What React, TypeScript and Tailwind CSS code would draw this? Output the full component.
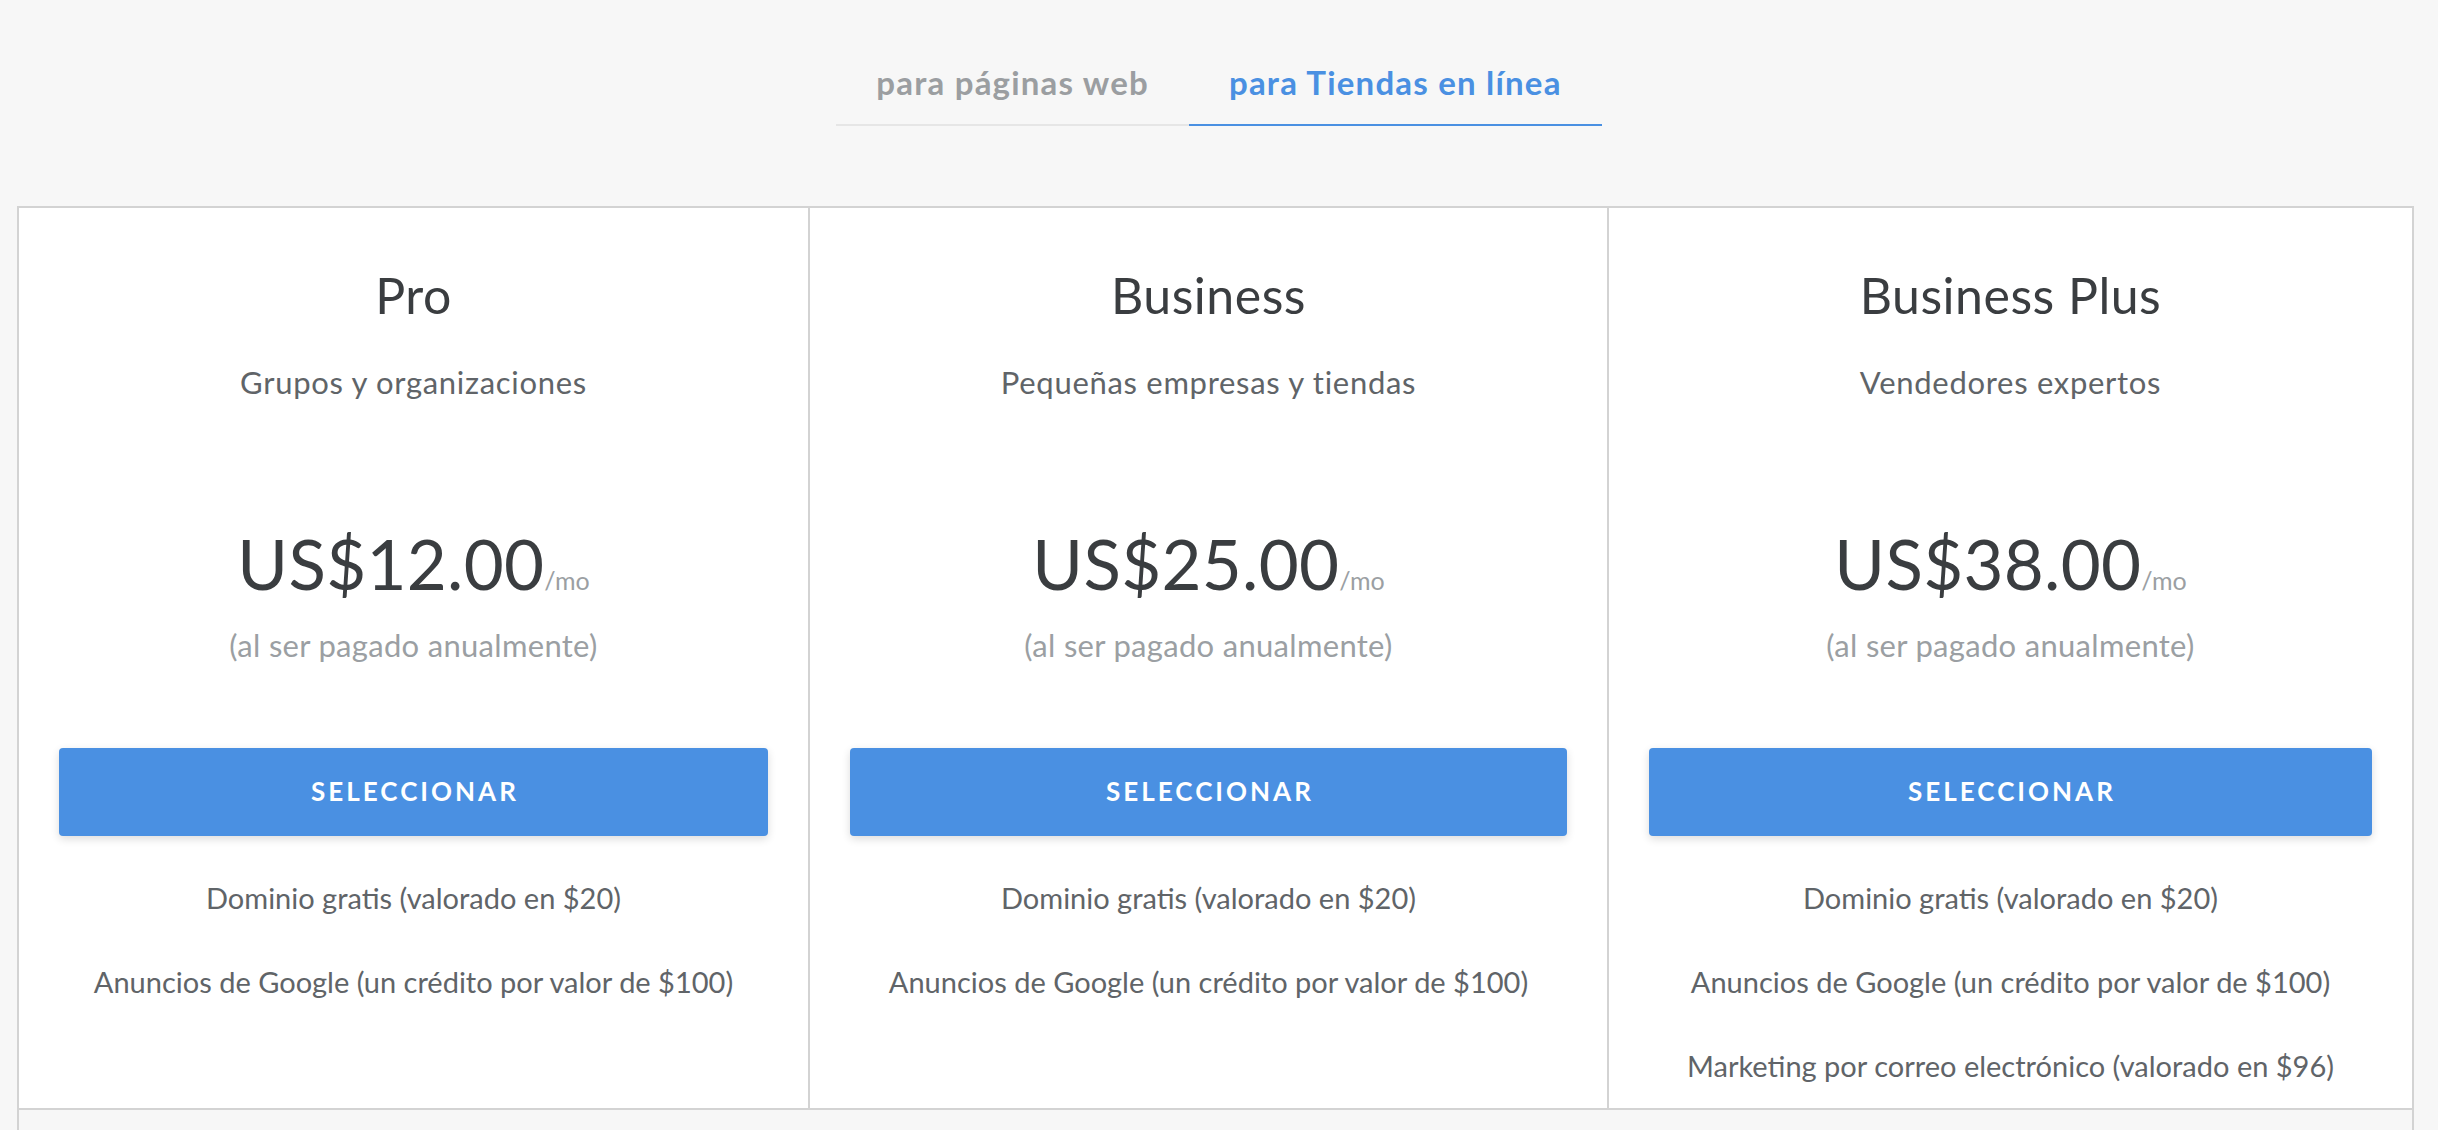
import React from "react";

type Plan = {
  name: string;
  desc: string;
  price: string;
  features: string[];
};

const plans: Plan[] = [
  {
    name: "Pro",
    desc: "Grupos y organizaciones",
    price: "US$12.00",
    features: [
      "Dominio gratis (valorado en $20)",
      "Anuncios de Google (un crédito por valor de $100)",
    ],
  },
  {
    name: "Business",
    desc: "Pequeñas empresas y tiendas",
    price: "US$25.00",
    features: [
      "Dominio gratis (valorado en $20)",
      "Anuncios de Google (un crédito por valor de $100)",
    ],
  },
  {
    name: "Business Plus",
    desc: "Vendedores expertos",
    price: "US$38.00",
    features: [
      "Dominio gratis (valorado en $20)",
      "Anuncios de Google (un crédito por valor de $100)",
      "Marketing por correo electrónico (valorado en $96)",
    ],
  },
];

function PlanColumn({ plan, first }: { plan: Plan; first: boolean }) {
  return (
    <div
      className={
        "flex flex-col items-center text-center pt-[57px] px-[40px] " +
        (first ? "" : "border-l-2 border-[#d3d3d3]")
      }
    >
      <h2 className="text-[50px] leading-[1.2] tracking-[0.5px] text-[#3a3d40] font-normal whitespace-nowrap">
        {plan.name}
      </h2>
      <p className="mt-[39px] text-[31px] leading-[1.2] tracking-[0.7px] text-[#606468] whitespace-nowrap">
        {plan.desc}
      </p>
      <div className="mt-[122px] text-[69px] leading-[1.2] tracking-[0.3px] text-[#3a3d40] whitespace-nowrap">
        {plan.price}
        <span className="text-[25px] tracking-normal text-[#9b9fa3]">/mo</span>
      </div>
      <p className="mt-[21px] text-[31px] leading-[1.2] tracking-[0.3px] text-[#9b9fa3] whitespace-nowrap">
        (al ser pagado anualmente)
      </p>
      <button className="mt-[84px] w-full h-[88px] rounded-[4px] bg-[#4a90e2] text-white text-[26px] font-bold tracking-[3px] pl-[3px] shadow-[0_3px_8px_rgba(0,0,0,0.14)]">
        SELECCIONAR
      </button>
      <ul className="mt-[20px] w-full">
        {plan.features.map((f) => (
          <li
            key={f}
            className="text-[29px] leading-[84px] text-[#606468] whitespace-nowrap"
          >
            {f}
          </li>
        ))}
      </ul>
    </div>
  );
}

export default function App() {
  return (
    <div className="min-h-screen bg-[#f7f7f7] font-['Lato',sans-serif] overflow-hidden">
      <div className="flex justify-center pt-[63px]">
        <button className="px-[40px] pb-[21px] border-b-2 border-[#e6e6e6] text-[33px] leading-[1.2] font-bold tracking-[1.2px] text-[#9b9ea1]">
          para páginas web
        </button>
        <button className="px-[40px] pb-[21px] border-b-2 border-[#4a90e2] text-[33px] leading-[1.2] font-bold tracking-[1.2px] text-[#4a90e2]">
          para Tiendas en línea
        </button>
      </div>

      <div className="mt-[80px] ml-[17px] w-[2397px] border-x-2 border-t-2 border-[#d3d3d3]">
        <div className="grid grid-cols-[789px_799px_1fr] bg-white border-b-2 border-[#d3d3d3]">
          {plans.map((p, i) => (
            <PlanColumn key={p.name} plan={p} first={i === 0} />
          ))}
        </div>
        <div className="h-[60px] bg-[#f7f7f7]" />
      </div>
    </div>
  );
}
